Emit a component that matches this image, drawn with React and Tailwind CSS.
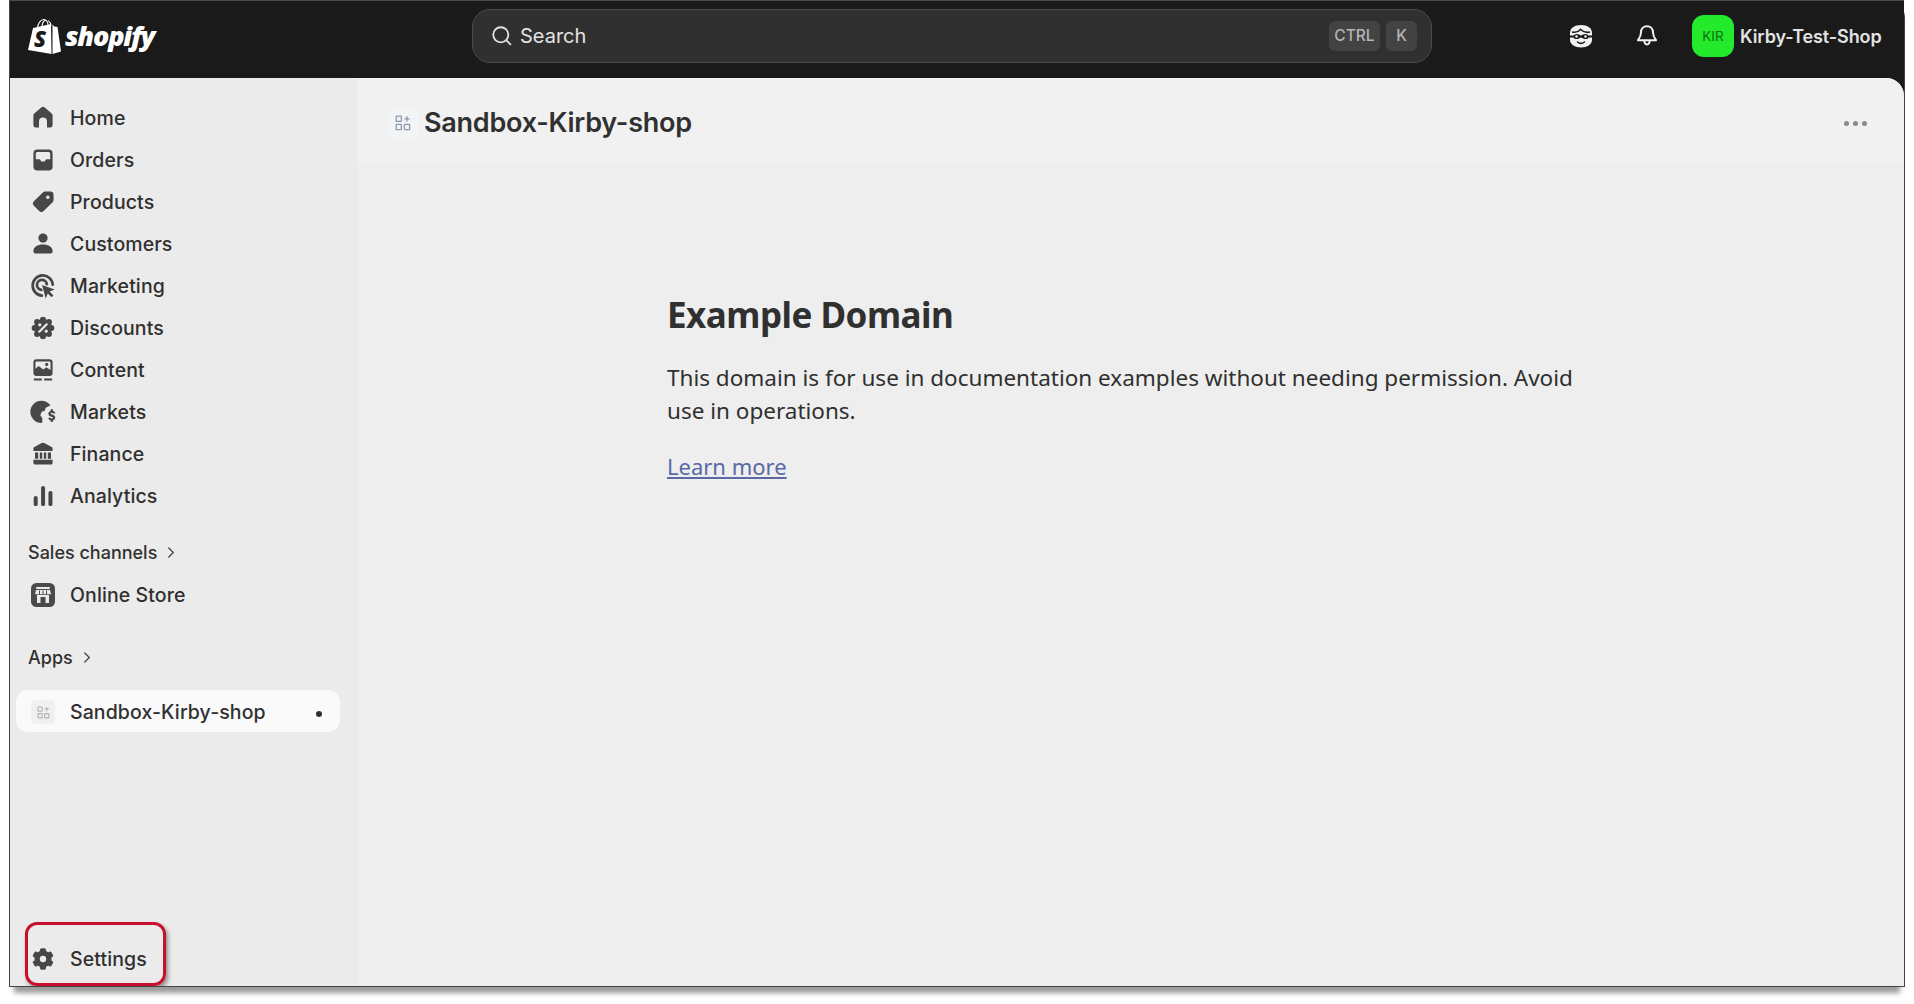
const inter = { fontFamily: '"Inter", "Liberation Sans", sans-serif' };

function I({ children, className = "" }) {
  return (
    <svg viewBox="0 0 20 20" className={`w-[32px] h-[32px] -mx-[1px] shrink-0 text-[#474747] ${className}`} fill="currentColor">
      {children}
    </svg>
  );
}

const HomeIcon = () => (
  <I>
    <path d="M8.900 3.500a1.700 1.700 0 0 1 2.200 0l4.200 3.500c.45.35.7.85.7 1.350v6.150a1.500 1.500 0 0 1-1.500 1.500h-2V12.200a2.500 2.500 0 0 0-5 0V16h-2A1.500 1.500 0 0 1 4 14.500V8.350c0-.5.250-1 .7-1.350z" />
  </I>
);
const OrdersIcon = () => (
  <I>
    <path
      fillRule="evenodd"
      d="M6.500 3.500h7A2.500 2.500 0 0 1 16 6v8a2.500 2.500 0 0 1-2.500 2.500h-7A2.500 2.500 0 0 1 4 14V6a2.500 2.500 0 0 1 2.500-2.500zM6.500 5A1 1 0 0 0 5.500 6v3.600h2.100a1 1 0 0 1 .9.550l.2.4a.8.8 0 0 0 .7.450h1.200a.8.8 0 0 0 .7-.450l.2-.4a1 1 0 0 1 .9-.550h2.100V6a1 1 0 0 0-1-1z"
    />
  </I>
);
const ProductsIcon = () => (
  <I>
    <path
      fillRule="evenodd"
      d="M11.300 3.400h3.300a2 2 0 0 1 2 2v3.300a2 2 0 0 1-.6 1.400l-5.600 5.600a2 2 0 0 1-2.800 0l-3.300-3.300a2 2 0 0 1 0-2.800l5.600-5.600a2 2 0 0 1 1.400-.6zM13 5.900a1.100 1.100 0 1 0 0 2.200 1.100 1.100 0 0 0 0-2.200z"
    />
  </I>
);
const CustomersIcon = () => (
  <I>
    <circle cx="10" cy="6.300" r="2.900" />
    <path d="M4 14.300c0-2.400 2.500-4 6-4s6 1.600 6 4a1.700 1.700 0 0 1-1.700 1.700H5.700A1.700 1.700 0 0 1 4 14.300z" />
  </I>
);
const MarketingIcon = () => (
  <I>
    <path d="M9.300 16a6.300 6.300 0 1 1 6.800-6.800" fill="none" stroke="currentColor" strokeWidth="1.700" strokeLinecap="round" />
    <path d="M8.900 12.400a3.100 3.100 0 1 1 3.500-3.500" fill="none" stroke="currentColor" strokeWidth="1.700" strokeLinecap="round" />
    <path d="M9.400 9.400l7.900 2.800-3.100 1.300 2.300 2.400-1.100 1.100-2.400-2.300-1.300 3.100z" />
  </I>
);
const DiscountsIcon = () => (
  <I>
    <circle cx="10" cy="10" r="5.600" />
    {[0, 45, 90, 135, 180, 225, 270, 315].map((a) => (
      <circle key={a} cx={10 + 5.2 * Math.cos((a * Math.PI) / 180)} cy={10 + 5.2 * Math.sin((a * Math.PI) / 180)} r="1.900" />
    ))}
    <path d="M12.300 7.700l-4.600 4.600" stroke="#ebebeb" strokeWidth="1.400" strokeLinecap="round" />
    <circle cx="8" cy="8" r="1" fill="#ebebeb" />
    <circle cx="12" cy="12" r="1" fill="#ebebeb" />
  </I>
);
const ContentIcon = () => (
  <I>
    <path
      fillRule="evenodd"
      d="M6 3.300h8A2 2 0 0 1 16 5.300v6.400a2 2 0 0 1-2 2H6a2 2 0 0 1-2-2V5.300a2 2 0 0 1 2-2zM6 4.700a.7.7 0 0 0-.7.700v3.800l2-1.700 2.800 2.200 2-1.400 2.600 1.700V5.400a.7.7 0 0 0-.7-.700z"
    />
    <circle cx="12.300" cy="6.500" r="1" />
    <path d="M4.300 15.300h5v1.200h-5zM10.700 15.300h5v1.200h-5z" />
  </I>
);
const MarketsIcon = () => (
  <I>
    <path d="M9 3a6.800 6.800 0 0 1 5.600 2.900l-2.900 1.400-.6 1.900-1.900.7-.9 2.100 1.200 1.700.1 2.900A6.900 6.900 0 0 1 9 16.800 6.900 6.900 0 0 1 9 3z" />
    <path d="M10.700 4.700l2.200.8-1.700 1-1.300-.4zM15.500 8.200a.8.8 0 0 1 .8.800v.4c.8.200 1.400.9 1.400 1.500h-1.500c0-.2-.3-.4-.7-.4s-.65.200-.65.500.25.450.8.600c1.100.250 2 .8 2 1.900 0 .85-.6 1.500-1.400 1.750v.5a.8.8 0 0 1-1.500 0v-.5c-.85-.250-1.450-.9-1.450-1.650h1.500c0 .3.300.5.700.5s.65-.2.650-.5-.3-.45-.85-.6c-1.050-.25-1.950-.8-1.950-1.900 0-.8.550-1.400 1.400-1.650V9a.8.8 0 0 1 .8-.8z" />
  </I>
);
const FinanceIcon = () => (
  <I>
    <path d="M9.200 3.100a1.800 1.800 0 0 1 1.600 0l4.600 2.500c.45.250.6.5.6.9v1.700H4V6.500c0-.4.150-.65.600-.9z" />
    <path d="M5 9h2v4H5zM8 9h1.500v4H8zM10.500 9H12v4h-1.500zM13 9h2v4h-2z" />
    <path d="M4 13.600h12v2.100a.8.8 0 0 1-.8.8H4.800a.8.8 0 0 1-.8-.8z" />
  </I>
);
const AnalyticsIcon = () => (
  <I>
    <rect x="4.200" y="10" width="2.500" height="6.300" rx="1.200" />
    <rect x="8.800" y="3.800" width="2.500" height="12.500" rx="1.200" />
    <rect x="13.400" y="6.800" width="2.500" height="9.500" rx="1.200" />
  </I>
);
const SettingsIcon = () => (
  <I>
    <circle cx="10" cy="10" r="5.300" />
    {[0, 60, 120].map((a) => (
      <rect key={a} x="8.100" y="3.300" width="3.800" height="13.400" rx="1" transform={`rotate(${a} 10 10)`} />
    ))}
    <circle cx="10" cy="10" r="2" fill="#ebebeb" />
  </I>
);
const StoreIcon = () => (
  <svg viewBox="0 0 24 24" className="w-[24px] h-[24px]">
    <rect width="24" height="24" rx="5.500" fill="#4a4a4a" />
    <rect x="5" y="4" width="14" height="2" rx="1" fill="#ebebeb" />
    <path d="M5 7h14l1 4.200H4z" fill="#ebebeb" />
    <path d="M8.500 7.500v3.700M12 7.500v3.700M15.500 7.500v3.700" stroke="#4a4a4a" strokeWidth="1" />
    <rect x="6" y="12" width="12" height="8" fill="#ebebeb" />
    <rect x="9.500" y="14" width="5" height="6" fill="#4a4a4a" />
  </svg>
);
const AppGlyph = ({ className }) => (
  <svg viewBox="0 0 16 16" className={className} fill="none" stroke="currentColor" strokeWidth="1.300">
    <rect x="1.200" y="1.200" width="5.200" height="5.200" rx="0.600" />
    <rect x="1.200" y="9.400" width="5.200" height="5.200" rx="0.600" />
    <rect x="9.400" y="9.400" width="5.200" height="5.200" rx="0.600" />
    <path d="M12 1.200v5.200M9.400 3.800h5.200" />
  </svg>
);

const Logo = () => (
  <div className="flex items-center ml-[18px] w-[444px] shrink-0">
    <svg viewBox="0 0 33 36" className="w-[33px] h-[37px] shrink-0">
      <path d="M9.500 10C9.500 5 12.500 1.500 15.500 1c3-.4 4.500 3 4.700 6.500M14 8.500c0-3 1-5.500 3.200-6.800M23 7.500c-.2-2.500-1.300-4.500-2.800-5.400" fill="none" stroke="#fff" strokeWidth="1.100" />
      <path d="M5 9.500L23 5.500 23.500 35.500 0 31.500z" fill="#fff" />
      <path d="M24.500 6l1.800 2 3.200.5L33 33 24.500 35.500z" fill="#fff" />
      <text x="6" y="28" fill="#1a1a1a" fontFamily="Open Sans, sans-serif" fontWeight="800" fontSize="22" fontStyle="italic">S</text>
    </svg>
    <span className="ml-[4px] -mt-[2px] text-[27px] leading-none font-extrabold italic text-white tracking-[-1.200px]" style={{ fontFamily: '"Open Sans", sans-serif' }}>
      shopify
    </span>
  </div>
);

const Kbd = ({ children, className }) => (
  <span className={`h-[30px] rounded-[6px] bg-[#434343] text-[#b5b5b5] text-[15.500px] font-medium flex items-center justify-center ${className}`}>
    {children}
  </span>
);

const Header = () => (
  <header className="h-[78px] bg-[#1a1a1a] flex items-center shrink-0 border-t border-[#4a4a4a] pb-[7px]">
    <Logo />
    <div className="w-[960px] h-[54px] shrink-0 rounded-[18px] bg-[#303030] border border-[#4c4c4c] flex items-center pl-[17px] pr-[14px]">
      <svg viewBox="0 0 20 20" className="w-[24px] h-[24px] text-[#e3e3e3]" fill="none" stroke="currentColor" strokeWidth="1.500" strokeLinecap="round">
        <circle cx="9" cy="9" r="6.300" />
        <path d="M13.700 13.700L17 17" />
      </svg>
      <span className="ml-[6px] text-[20px] text-[#e3e3e3]">Search</span>
      <div className="ml-auto flex gap-[6px]">
        <Kbd className="w-[51px]">CTRL</Kbd>
        <Kbd className="w-[31px]">K</Kbd>
      </div>
    </div>
    <svg viewBox="0 0 24 24" className="ml-[137px] w-[24px] h-[24px] shrink-0">
      <path d="M1 9C1 4 5.500 1 12 1s11 3 11 8v7c0 4.500-5 7.500-11 7.500S1 20.500 1 16z" fill="#f1f1f1" />
      <path d="M3 8c3 .7 6 .3 8.500-2.500C14 7.800 18 8.800 21 8" fill="none" stroke="#1a1a1a" strokeWidth="1.600" />
      <path d="M1 11.500h3.500a4 4 0 0 1 3-1.500c1.800 0 3 .8 4.500 1.500 1.500-.7 2.700-1.500 4.500-1.500a4 4 0 0 1 3 1.500H23v2h-3.500c-.5 1-1.500 1.500-3 1.500-1.800 0-3-.7-4.500-1.500-1.500.8-2.700 1.500-4.500 1.500-1.500 0-2.500-.5-3-1.500H1z" fill="#1a1a1a" />
      <circle cx="7.500" cy="12.500" r="1.300" fill="#f1f1f1" />
      <circle cx="16.500" cy="12.500" r="1.300" fill="#f1f1f1" />
      <path d="M8.500 18c2 1.600 5 1.600 7 0" fill="none" stroke="#1a1a1a" strokeWidth="1.600" strokeLinecap="round" />
    </svg>
    <svg viewBox="0 0 20 22" className="ml-[43px] w-[22px] h-[24px] shrink-0" fill="none" stroke="#f1f1f1" strokeWidth="1.800" strokeLinejoin="round">
      <path d="M10 2c-3.300 0-5.500 2.500-5.500 5.600 0 3.800-1.300 5.200-2.800 7.200h16.600c-1.500-2-2.800-3.400-2.800-7.200C15.500 4.500 13.300 2 10 2z" />
      <path d="M7.500 15c0 5 5 5 5 0" />
    </svg>
    <div className="ml-[34px] w-[42px] h-[42px] rounded-[12px] bg-[#23ea2a] text-[#116f14] text-[13.500px] flex items-center justify-center shrink-0">
      KIR
    </div>
    <span className="ml-[6px] text-[18px] font-semibold text-[#e3e3e3] whitespace-nowrap tracking-[-0.100px]">Kirby-Test-Shop</span>
  </header>
);

const nav = [
  ["Home", HomeIcon],
  ["Orders", OrdersIcon],
  ["Products", ProductsIcon],
  ["Customers", CustomersIcon],
  ["Marketing", MarketingIcon],
  ["Discounts", DiscountsIcon],
  ["Content", ContentIcon],
  ["Markets", MarketsIcon],
  ["Finance", FinanceIcon],
  ["Analytics", AnalyticsIcon],
];

const Row = ({ icon, children, className = "" }) => (
  <div className={`h-[42px] pt-[2px] flex items-center pl-[18px] gap-[12px] text-[19.500px] tracking-[0.100px] font-medium text-[#303030] ${className}`}>
    {icon}
    <span className="pt-[2px]">{children}</span>
  </div>
);

const Section = ({ children, className = "" }) => (
  <div className={`h-[42px] flex items-center pl-[18px] gap-[10px] text-[18px] font-medium text-[#303030] ${className}`}>
    {children}
    <svg viewBox="0 0 10 14" className="w-[9px] h-[13px]" fill="none" stroke="#4a4a4a" strokeWidth="1.500" strokeLinecap="round" strokeLinejoin="round">
      <path d="M2 2l5 5-5 5" />
    </svg>
  </div>
);

const Sidebar = () => (
  <aside className="w-[348px] shrink-0 bg-[#ebebeb] flex flex-col pt-[18px] pb-[7px]">
    {nav.map(([label, Icon]) => (
      <Row key={label} icon={<Icon />}>
        {label}
      </Row>
    ))}
    <Section className="mt-[15px]">Sales channels</Section>
    <Row icon={<span className="w-[30px] h-[30px] flex items-center justify-center"><StoreIcon /></span>}>Online Store</Row>
    <Section className="mt-[21px]">Apps</Section>
    <div className="mt-[12px] ml-[6px] w-[324px] h-[42px] pt-[2px] rounded-[12px] bg-[#fafafa] flex items-center pl-[15px] gap-[15px] tracking-[0.100px] text-[19.500px] font-medium text-[#303030]">
      <span className="w-[24px] h-[24px] rounded-[5px] bg-[#f0f0f0] flex items-center justify-center">
        <AppGlyph className="w-[13px] h-[13px] text-[#b0b0b0]" />
      </span>
      <span className="pt-[2px]">Sandbox-Kirby-shop</span>
      <span className="ml-auto mr-[18px] w-[6px] h-[6px] rounded-full bg-[#303030] mt-[3px]" />
    </div>
    <div className="mt-auto relative">
      <Row icon={<SettingsIcon />}>Settings</Row>
      <div className="absolute left-[15px] top-[-15px] w-[141px] h-[64px] rounded-[12px] border-[3px] border-[#c8102e] shadow-[2px_3px_4px_rgba(0,0,0,0.4)]" />
    </div>
  </aside>
);

const Main = () => (
  <main className="flex-1 min-w-0 bg-[#eeeeee] flex flex-col">
    <div className="h-[84px] bg-[#f1f1f1] flex items-center pt-[6px] pl-[30px] pr-[37px] shrink-0">
      <span className="w-[30px] h-[30px] rounded-[6px] bg-[#f3f4f6] flex items-center justify-center">
        <AppGlyph className="w-[16px] h-[16px] text-[#8c9aad]" />
      </span>
      <span className="ml-[6px] text-[27px] font-semibold text-[#303030] tracking-[-0.250px]">Sandbox-Kirby-shop</span>
      <div className="ml-auto flex gap-[4px]">
        <span className="w-[5px] h-[5px] rounded-full bg-[#8a8a8a]" />
        <span className="w-[5px] h-[5px] rounded-full bg-[#8a8a8a]" />
        <span className="w-[5px] h-[5px] rounded-full bg-[#8a8a8a]" />
      </div>
    </div>
    <div className="pl-[309px] pt-[128px] text-[#303030]" style={{ fontFamily: '"Noto Sans", sans-serif' }}>
      <h1 className="text-[35px] leading-[50px] font-bold tracking-[-0.500px]">Example Domain</h1>
      <p className="mt-[21px] w-[930px] text-[22.500px] leading-[33px]">
        This domain is for use in documentation examples without needing permission. Avoid use in operations.
      </p>
      <a className="mt-[23px] block w-fit text-[22px] leading-[33px] text-[#5a69a6] underline">Learn more</a>
    </div>
  </main>
);

export default function App() {
  return (
    <div className="w-[1914px] h-[1004px] bg-white px-[9px] overflow-hidden" style={inter}>
      <div className="h-[987px] border-x border-b border-[#444444] rounded-tr-[18px] flex flex-col shadow-[0_11px_5px_-5px_rgba(0,0,0,0.4)] bg-[#1a1a1a]">
        <Header />
        <div className="flex-1 flex min-h-0 overflow-hidden rounded-tr-[18px]">
          <Sidebar />
          <Main />
        </div>
      </div>
    </div>
  );
}
